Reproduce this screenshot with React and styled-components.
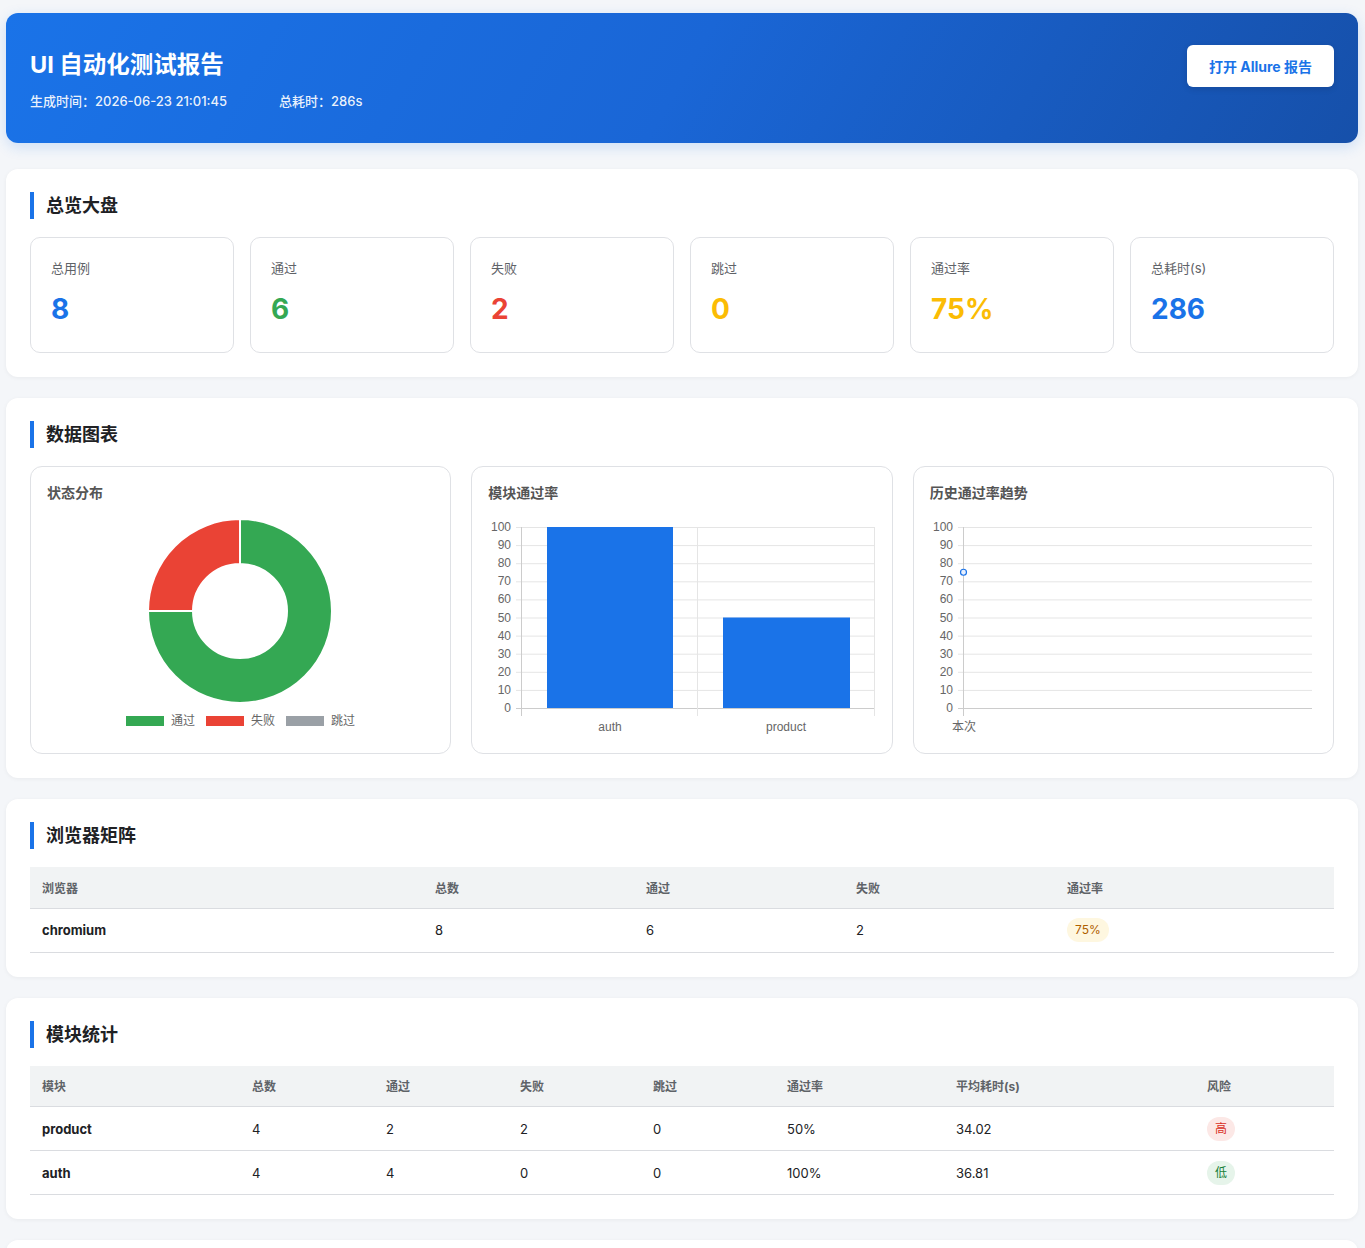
import React from "react";
import styled, { createGlobalStyle } from "styled-components";

const Global = createGlobalStyle`
  html, body { margin: 0; padding: 0; background: #f4f6f9; }
  body { font-family: "Inter", "Noto Sans CJK SC", sans-serif; color: #202124; }
  * { box-sizing: border-box; }
`;

const Page = styled.div`
  padding: 13px 7px 24px 6px;
  display: flex;
  flex-direction: column;
  gap: 21px;
`;

const Header = styled.header`
  display: flex;
  justify-content: space-between;
  align-items: flex-start;
  padding: 32px 24px;
  border-radius: 12px;
  background: linear-gradient(120deg, #1a73e8 0%, #1a66d6 50%, #1650aa 100%);
  box-shadow: 0 4px 14px rgba(26, 115, 232, 0.18);
  color: #fff;
  margin-bottom: 5px;
`;

const Title = styled.h1`
  margin: 0;
  font-size: 23.5px;
  line-height: 40px;
  font-weight: 700;
`;

const Meta = styled.div`
  display: flex;
  gap: 52px;
  margin-top: 6px;
  font-size: 13px;
  line-height: 20px;
  font-weight: 500;
  color: rgba(255, 255, 255, 0.92);
`;

const AllureButton = styled.button`
  height: 42px;
  padding: 0 22px;
  border: none;
  border-radius: 6px;
  background: #fff;
  color: #1a73e8;
  font-family: inherit;
  font-size: 14px;
  font-weight: 700;
  box-shadow: 0 2px 6px rgba(0, 0, 0, 0.12);
  cursor: pointer;
`;

const Card = styled.section`
  background: #fff;
  border-radius: 12px;
  padding: 23px 24px 24px;
  min-height: ${(p) => p.$minHeight || "auto"};
  box-shadow: 0 1px 4px rgba(0, 0, 0, 0.05);
`;

const SectionTitle = styled.h2`
  margin: 0 0 18px;
  border-left: 4px solid #1a73e8;
  padding-left: 12px;
  font-size: 18px;
  line-height: 27px;
  font-weight: 700;
  color: #202124;
`;

const StatGrid = styled.div`
  display: grid;
  grid-template-columns: repeat(6, 1fr);
  gap: 16px;
`;

const StatCard = styled.div`
  border: 1px solid #dfe1e5;
  border-radius: 10px;
  padding: 20px 20px 26px;
`;

const StatLabel = styled.div`
  font-size: 13px;
  line-height: 20px;
  color: #5f6368;
`;

const StatValue = styled.div`
  margin-top: 14px;
  font-size: 28px;
  line-height: 34px;
  font-weight: 700;
  color: ${(p) => p.$color};
`;

const ChartGrid = styled.div`
  display: grid;
  grid-template-columns: repeat(3, 1fr);
  gap: 20px;
`;

const ChartCard = styled.div`
  border: 1px solid #dfe1e5;
  border-radius: 12px;
  padding: 16px;
  display: flex;
  flex-direction: column;
  gap: 12px;
`;

const ChartTitle = styled.div`
  font-size: 14px;
  line-height: 20px;
  font-weight: 700;
  color: #555;
`;

const Table = styled.table`
  width: 100%;
  border-collapse: collapse;
  table-layout: fixed;
`;

const Th = styled.th`
  background: #f1f3f4;
  height: 41px;
  padding: 0 12px;
  text-align: left;
  font-size: 12px;
  font-weight: 700;
  color: #5f6368;
  border-bottom: 1px solid #dadce0;
`;

const Td = styled.td`
  height: 44px;
  padding: 0 12px;
  font-size: 13px;
  color: #202124;
  border-bottom: 1px solid #dadce0;
  font-weight: ${(p) => (p.$bold ? 700 : 400)};
`;

const Badge = styled.span`
  display: inline-block;
  padding: 3px 8px;
  border-radius: 12px;
  font-size: 12px;
  line-height: 18px;
  background: ${(p) => p.$bg};
  color: ${(p) => p.$fg};
`;

const AxisText = styled.text`
  font-family: "Liberation Sans", Arial, sans-serif;
  font-size: 12px;
  fill: #666;
`;

const LegendText = styled.text`
  font-family: "Inter", "Noto Sans CJK SC", sans-serif;
  font-size: 12px;
  fill: #666;
`;

const ticks = [0, 10, 20, 30, 40, 50, 60, 70, 80, 90, 100];
const yOf = (v) => 193 - (v / 100) * 181;

function YAxis({ right }) {
  return ticks.map((t) => (
    <g key={t}>
      <line x1="28" x2={right} y1={yOf(t) + 0.5} y2={yOf(t) + 0.5} stroke={t === 0 ? "#ccc" : "#e5e5e5"} />
      <AxisText x="23" y={yOf(t) + 4} textAnchor="end">{t}</AxisText>
    </g>
  ));
}

function Donut() {
  return (
    <svg width="387" height="222" viewBox="0 0 387 222">
      <path d="M193 4 A92 92 0 1 1 101 96 L146 96 A47 47 0 1 0 193 49 Z" fill="#34a853" stroke="#fff" strokeWidth="2" />
      <path d="M101 96 A92 92 0 0 1 193 4 L193 49 A47 47 0 0 0 146 96 Z" fill="#ea4335" stroke="#fff" strokeWidth="2" />
      <rect x="79" y="201" width="38" height="10" fill="#34a853" />
      <LegendText x="124" y="210">通过</LegendText>
      <rect x="159" y="201" width="38" height="10" fill="#ea4335" />
      <LegendText x="204" y="210">失败</LegendText>
      <rect x="239" y="201" width="38" height="10" fill="#9aa0a6" />
      <LegendText x="284" y="210">跳过</LegendText>
    </svg>
  );
}

function BarChart() {
  return (
    <svg width="387" height="222" viewBox="0 0 387 222">
      <YAxis right={387} />
      {[33.5, 209.5, 386.5].map((x) => (
        <line key={x} x1={x} x2={x} y1="12" y2="201" stroke={x === 33.5 ? "#ccc" : "#e5e5e5"} />
      ))}
      <rect x="59" y={yOf(100)} width="126" height={yOf(0) - yOf(100)} fill="#1a73e8" />
      <rect x="235" y={yOf(50)} width="127" height={yOf(0) - yOf(50)} fill="#1a73e8" />
      <AxisText x="122" y="216" textAnchor="middle">auth</AxisText>
      <AxisText x="298" y="216" textAnchor="middle">product</AxisText>
    </svg>
  );
}

function LineChart() {
  return (
    <svg width="387" height="222" viewBox="0 0 387 222">
      <YAxis right={382} />
      <line x1="33.5" x2="33.5" y1="12" y2="201" stroke="#ccc" />
      <circle cx="33.5" cy={yOf(75)} r="3" fill="#e8f0fe" stroke="#1a73e8" strokeWidth="1.2" />
      <LegendText x="34" y="216" textAnchor="middle">本次</LegendText>
    </svg>
  );
}

const stats = [
  { label: "总用例", value: "8", color: "#1a73e8" },
  { label: "通过", value: "6", color: "#34a853" },
  { label: "失败", value: "2", color: "#ea4335" },
  { label: "跳过", value: "0", color: "#fbbc04" },
  { label: "通过率", value: "75%", color: "#fbbc04" },
  { label: "总耗时(s)", value: "286", color: "#1a73e8" },
];

const modules = [
  { name: "product", total: 4, pass: 2, fail: 2, skip: 0, rate: "50%", avg: "34.02", risk: "高" },
  { name: "auth", total: 4, pass: 4, fail: 0, skip: 0, rate: "100%", avg: "36.81", risk: "低" },
];

export default function App() {
  return (
    <>
      <Global />
      <Page>
        <Header>
          <div>
            <Title>UI 自动化测试报告</Title>
            <Meta>
              <span>生成时间：2026-06-23 21:01:45</span>
              <span>总耗时：286s</span>
            </Meta>
          </div>
          <AllureButton>打开 Allure 报告</AllureButton>
        </Header>

        <Card>
          <SectionTitle>总览大盘</SectionTitle>
          <StatGrid>
            {stats.map((s) => (
              <StatCard key={s.label}>
                <StatLabel>{s.label}</StatLabel>
                <StatValue $color={s.color}>{s.value}</StatValue>
              </StatCard>
            ))}
          </StatGrid>
        </Card>

        <Card>
          <SectionTitle>数据图表</SectionTitle>
          <ChartGrid>
            <ChartCard>
              <ChartTitle>状态分布</ChartTitle>
              <Donut />
            </ChartCard>
            <ChartCard>
              <ChartTitle>模块通过率</ChartTitle>
              <BarChart />
            </ChartCard>
            <ChartCard>
              <ChartTitle>历史通过率趋势</ChartTitle>
              <LineChart />
            </ChartCard>
          </ChartGrid>
        </Card>

        <Card>
          <SectionTitle>浏览器矩阵</SectionTitle>
          <Table>
            <colgroup>
              <col style={{ width: 393 }} />
              <col style={{ width: 211 }} />
              <col style={{ width: 210 }} />
              <col style={{ width: 211 }} />
              <col style={{ width: 279 }} />
            </colgroup>
            <thead>
              <tr>
                <Th>浏览器</Th>
                <Th>总数</Th>
                <Th>通过</Th>
                <Th>失败</Th>
                <Th>通过率</Th>
              </tr>
            </thead>
            <tbody>
              <tr>
                <Td $bold>chromium</Td>
                <Td>8</Td>
                <Td>6</Td>
                <Td>2</Td>
                <Td>
                  <Badge $bg="#fef7e0" $fg="#b06000">75%</Badge>
                </Td>
              </tr>
            </tbody>
          </Table>
        </Card>

        <Card>
          <SectionTitle>模块统计</SectionTitle>
          <Table>
            <colgroup>
              <col style={{ width: 210 }} />
              <col style={{ width: 134 }} />
              <col style={{ width: 134 }} />
              <col style={{ width: 133 }} />
              <col style={{ width: 134 }} />
              <col style={{ width: 169 }} />
              <col style={{ width: 251 }} />
              <col style={{ width: 139 }} />
            </colgroup>
            <thead>
              <tr>
                <Th>模块</Th>
                <Th>总数</Th>
                <Th>通过</Th>
                <Th>失败</Th>
                <Th>跳过</Th>
                <Th>通过率</Th>
                <Th>平均耗时(s)</Th>
                <Th>风险</Th>
              </tr>
            </thead>
            <tbody>
              {modules.map((m) => (
                <tr key={m.name}>
                  <Td $bold>{m.name}</Td>
                  <Td>{m.total}</Td>
                  <Td>{m.pass}</Td>
                  <Td>{m.fail}</Td>
                  <Td>{m.skip}</Td>
                  <Td>{m.rate}</Td>
                  <Td>{m.avg}</Td>
                  <Td>
                    {m.risk === "高" ? (
                      <Badge $bg="#fce8e6" $fg="#d93025">高</Badge>
                    ) : (
                      <Badge $bg="#e6f4ea" $fg="#188038">低</Badge>
                    )}
                  </Td>
                </tr>
              ))}
            </tbody>
          </Table>
        </Card>

        <Card $minHeight="80px" />
      </Page>
    </>
  );
}
